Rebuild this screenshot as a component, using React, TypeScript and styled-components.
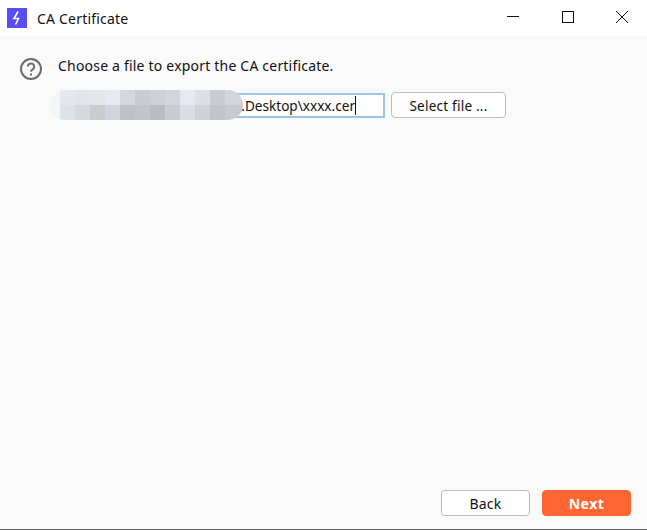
import styled, { createGlobalStyle } from "styled-components";

const GlobalStyle = createGlobalStyle`
  html, body {
    margin: 0;
    padding: 0;
    background: #fafafa;
  }
  * {
    box-sizing: border-box;
  }
`;

const mosaicTop = ["#f3f6f9", "#e4e8ee", "#e1e4e9", "#e2e5ea", "#e6e9ed", "#d3d7de", "#c9ccd3", "#cdd0d7", "#d2d6dc", "#e6e9f1", "#dcdfe6", "#c9ccd2", "#d2d5dc"];
const mosaicBottom = ["#f3f6f9", "#dee2e9", "#d5d8dc", "#c9cccf", "#d0d5dd", "#bfc1c5", "#c2c5cb", "#b9bcc3", "#c8ccd3", "#dadde4", "#cfd2d7", "#c2c5c9", "#c7cace"];

export default function App() {
  return (
    <Window>
      <GlobalStyle />
      <TitleBar>
        <AppIcon viewBox="0 0 20 20">
          <rect width="20" height="20" fill="#5b4df5" />
          <path d="M11 3.5 L7 10.5 H11.5 L8.5 16.5" fill="none" stroke="#fff" strokeWidth="1.6" />
        </AppIcon>
        <Title>CA Certificate</Title>
        <WindowControls>
          <svg width="13" height="12" viewBox="0 0 13 12">
            <path d="M0 5.5H12" stroke="#111" strokeWidth="1" />
          </svg>
          <svg width="12" height="12" viewBox="0 0 12 12">
            <rect x="0.5" y="0.5" width="11" height="11" fill="none" stroke="#111" strokeWidth="1" />
          </svg>
          <svg width="12" height="12" viewBox="0 0 12 12">
            <path d="M0 0L12 12M12 0L0 12" stroke="#111" strokeWidth="1" />
          </svg>
        </WindowControls>
      </TitleBar>
      <Body>
        <Content>
          <Prompt>
            <svg width="24" height="24" viewBox="0 0 24 24" fill="none" stroke="#6b6b6b" strokeWidth="2">
              <circle cx="12" cy="12" r="10" />
              <path d="M8.8 9.6a3.2 3.2 0 1 1 4.8 2.8c-1 .6-1.6 1.2-1.6 2.4" />
              <path d="M12 16.6v1.8" />
            </svg>
            <PromptText>Choose a file to export the CA certificate.</PromptText>
          </Prompt>
          <FileRow>
            <PathField>
              <PathInput>
                .Desktop\xxxx.cer
                <Caret />
              </PathInput>
              <Mosaic>
                {[...mosaicTop, ...mosaicBottom].map((color, i) => (
                  <span key={i} style={{ background: color }} />
                ))}
              </Mosaic>
            </PathField>
            <SelectButton>Select file ...</SelectButton>
          </FileRow>
        </Content>
        <Footer>
          <BackButton>Back</BackButton>
          <NextButton>Next</NextButton>
        </Footer>
      </Body>
    </Window>
  );
}

const Window = styled.div`
  display: flex;
  flex-direction: column;
  width: 647px;
  height: 530px;
  overflow: hidden;
  font-family: "Noto Sans", "Open Sans", sans-serif;
  color: #111;
  background: #fafafa;
  border-bottom: 1px solid #666;
`;

const TitleBar = styled.header`
  display: flex;
  align-items: center;
  flex: none;
  height: 36px;
  padding-left: 7px;
  background: #fff;
`;

const AppIcon = styled.svg`
  width: 20px;
  height: 20px;
  margin-bottom: 1px;
`;

const Title = styled.span`
  margin-left: 10px;
  padding-top: 1px;
  font-size: 14px;
  letter-spacing: 0.2px;
`;

const WindowControls = styled.div`
  display: flex;
  align-items: center;
  gap: 42px;
  margin-left: auto;
  margin-right: 19px;
  margin-bottom: 2px;
`;

const Body = styled.main`
  display: flex;
  flex: 1;
  flex-direction: column;
  justify-content: space-between;
  padding: 0 16px 13px 19px;
`;

const Content = styled.div`
  display: flex;
  flex-direction: column;
`;

const Prompt = styled.div`
  display: flex;
  align-items: center;
  gap: 15px;
  height: 24px;
  margin-top: 21px;
`;

const PromptText = styled.span`
  margin-top: -8px;
  font-size: 14px;
  letter-spacing: 0.2px;
`;

const FileRow = styled.div`
  display: flex;
  align-items: center;
  gap: 6px;
  margin-top: 11px;
  margin-left: 39px;
`;

const PathField = styled.div`
  position: relative;
  width: 327px;
`;

const PathInput = styled.div`
  display: flex;
  align-items: center;
  justify-content: flex-end;
  height: 25px;
  padding-right: 27px;
  font-size: 13.6px;
  background: #fff;
  border: 2px solid #9cc3e8;
`;

const Caret = styled.i`
  width: 1px;
  height: 19px;
  background: #111;
`;

const Mosaic = styled.div`
  position: absolute;
  top: -3px;
  left: -8px;
  display: grid;
  grid-template-columns: 10px repeat(11, 15px) 18px;
  grid-template-rows: 15px 15px;
  width: 193px;
  height: 30px;
  overflow: hidden;
  border-radius: 15px;
`;

const SelectButton = styled.button`
  width: 115px;
  height: 26px;
  padding: 1px 0 0;
  font-family: inherit;
  font-size: 13.6px;
  letter-spacing: 0.2px;
  color: #111;
  background: #fff;
  border: 1px solid #bcbcbc;
  border-radius: 4px;
`;

const Footer = styled.footer`
  display: flex;
  justify-content: flex-end;
  gap: 12px;
`;

const BackButton = styled(SelectButton)`
  width: 89px;
  font-size: 14px;
`;

const NextButton = styled(BackButton)`
  font-weight: 700;
  letter-spacing: 0.5px;
  color: #fff;
  background: #ff6633;
  border-color: #ff6633;
`;
